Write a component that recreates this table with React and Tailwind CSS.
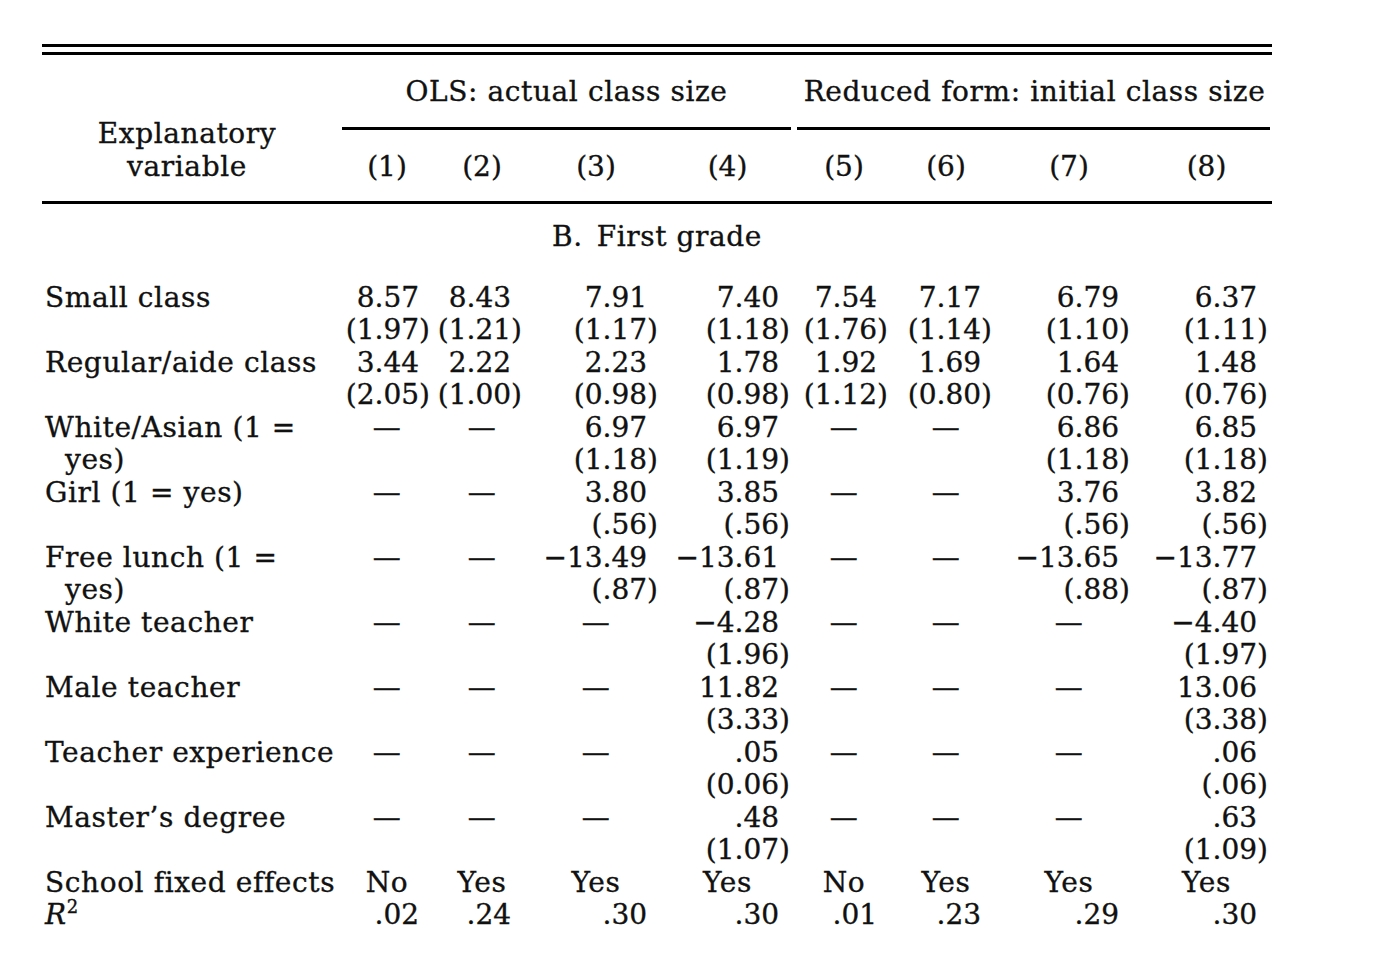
const GRID = 'grid grid-cols-[298px_94px_96px_132px_131px_102px_102px_144px_131px]'
const PAD = ['pr-[4px]', 'pr-[8px]', 'pr-[4px]', 'pr-[3px]', 'pr-[7px]', 'pr-[5px]', 'pr-[11px]', 'pr-[4px]']

const rows = [
  { label: ['Small class'], coef: ['8.57', '8.43', '7.91', '7.40', '7.54', '7.17', '6.79', '6.37'], se: ['(1.97)', '(1.21)', '(1.17)', '(1.18)', '(1.76)', '(1.14)', '(1.10)', '(1.11)'] },
  { label: ['Regular/aide class'], coef: ['3.44', '2.22', '2.23', '1.78', '1.92', '1.69', '1.64', '1.48'], se: ['(2.05)', '(1.00)', '(0.98)', '(0.98)', '(1.12)', '(0.80)', '(0.76)', '(0.76)'] },
  { label: ['White/Asian (1 =', 'yes)'], coef: ['—', '—', '6.97', '6.97', '—', '—', '6.86', '6.85'], se: ['', '', '(1.18)', '(1.19)', '', '', '(1.18)', '(1.18)'] },
  { label: ['Girl (1 = yes)'], coef: ['—', '—', '3.80', '3.85', '—', '—', '3.76', '3.82'], se: ['', '', '(.56)', '(.56)', '', '', '(.56)', '(.56)'] },
  { label: ['Free lunch (1 =', 'yes)'], coef: ['—', '—', '−13.49', '−13.61', '—', '—', '−13.65', '−13.77'], se: ['', '', '(.87)', '(.87)', '', '', '(.88)', '(.87)'] },
  { label: ['White teacher'], coef: ['—', '—', '—', '−4.28', '—', '—', '—', '−4.40'], se: ['', '', '', '(1.96)', '', '', '', '(1.97)'] },
  { label: ['Male teacher'], coef: ['—', '—', '—', '11.82', '—', '—', '—', '13.06'], se: ['', '', '', '(3.33)', '', '', '', '(3.38)'] },
  { label: ['Teacher experience'], coef: ['—', '—', '—', '.05', '—', '—', '—', '.06'], se: ['', '', '', '(0.06)', '', '', '', '(.06)'] },
  { label: ['Master’s degree'], coef: ['—', '—', '—', '.48', '—', '—', '—', '.63'], se: ['', '', '', '(1.07)', '', '', '', '(1.09)'] },
]

const fixedEffects = ['No', 'Yes', 'Yes', 'Yes', 'No', 'Yes', 'Yes', 'Yes']
const rSquared = ['.02', '.24', '.30', '.30', '.01', '.23', '.29', '.30']

function Cell({ value, i }) {
  if (!value) return <div />
  if (value === '—' || value === 'Yes' || value === 'No') {
    return <div className="text-center tracking-[0.6px]">{value}</div>
  }
  // numbers line up on the closing paren of the standard error
  return (
    <div className={`text-right whitespace-nowrap ${PAD[i]}`}>
      {value}
      {!value.startsWith('(') && <span className="invisible">)</span>}
    </div>
  )
}

function Line({ label, values, indent }) {
  return (
    <div className={GRID}>
      <div className={`whitespace-nowrap tracking-[0.6px] ${indent ? 'pl-[23px]' : 'pl-[3px]'}`}>{label}</div>
      {values.map((v, i) => (
        <Cell key={i} value={v} i={i} />
      ))}
    </div>
  )
}

export default function App() {
  return (
    <div
      className="w-[1375px] h-[977px] bg-white text-[#111] pl-[42px] pt-[44px] text-[28px] leading-[32.5px] [-webkit-text-stroke:0.35px_#111]"
      style={{ fontFamily: '"DejaVu Serif", serif' }}
    >
      <div className="w-[1230px]">
        {/* double top rule */}
        <div className="h-[3px] bg-black" />
        <div className="h-[3px] bg-black mt-[5px]" />

        {/* column heads */}
        <div className={`${GRID} pt-[21px]`}>
          <div className="row-span-3 self-end text-center pr-[8px] tracking-[0.6px]">
            Explanatory
            <br />
            variable
          </div>
          <div className="col-span-4 text-center whitespace-nowrap tracking-[0.6px]">OLS: actual class size</div>
          <div className="col-span-4 text-center whitespace-nowrap pl-[4px] tracking-[0.6px]">
            Reduced form: initial class size
          </div>
          <div className="col-span-4 mx-[2px] mt-[18px] mb-[21px] h-[3px] bg-black" />
          <div className="col-span-4 ml-[4px] mr-[2px] mt-[18px] mb-[21px] h-[3px] bg-black" />
          {[1, 2, 3, 4, 5, 6, 7, 8].map((n) => (
            <div key={n} className="text-center">
              ({n})
            </div>
          ))}
        </div>
        <div className="h-[3px] bg-black mt-[18px]" />

        <div className="text-center mt-[17px] mb-[28px] tracking-[0.6px]">
          B.<span className="inline-block w-[14px]" />First grade
        </div>

        {rows.map((r) => (
          <div key={r.label[0]}>
            <Line label={r.label[0]} values={r.coef} />
            <Line label={r.label[1] || ''} values={r.se} indent />
          </div>
        ))}

        <Line label="School fixed effects" values={fixedEffects} />
        <Line
          label={
            <span>
              <i>R</i>
              <sup className="text-[18px] -top-[11px]">2</sup>
            </span>
          }
          values={rSquared}
        />
      </div>
    </div>
  )
}
